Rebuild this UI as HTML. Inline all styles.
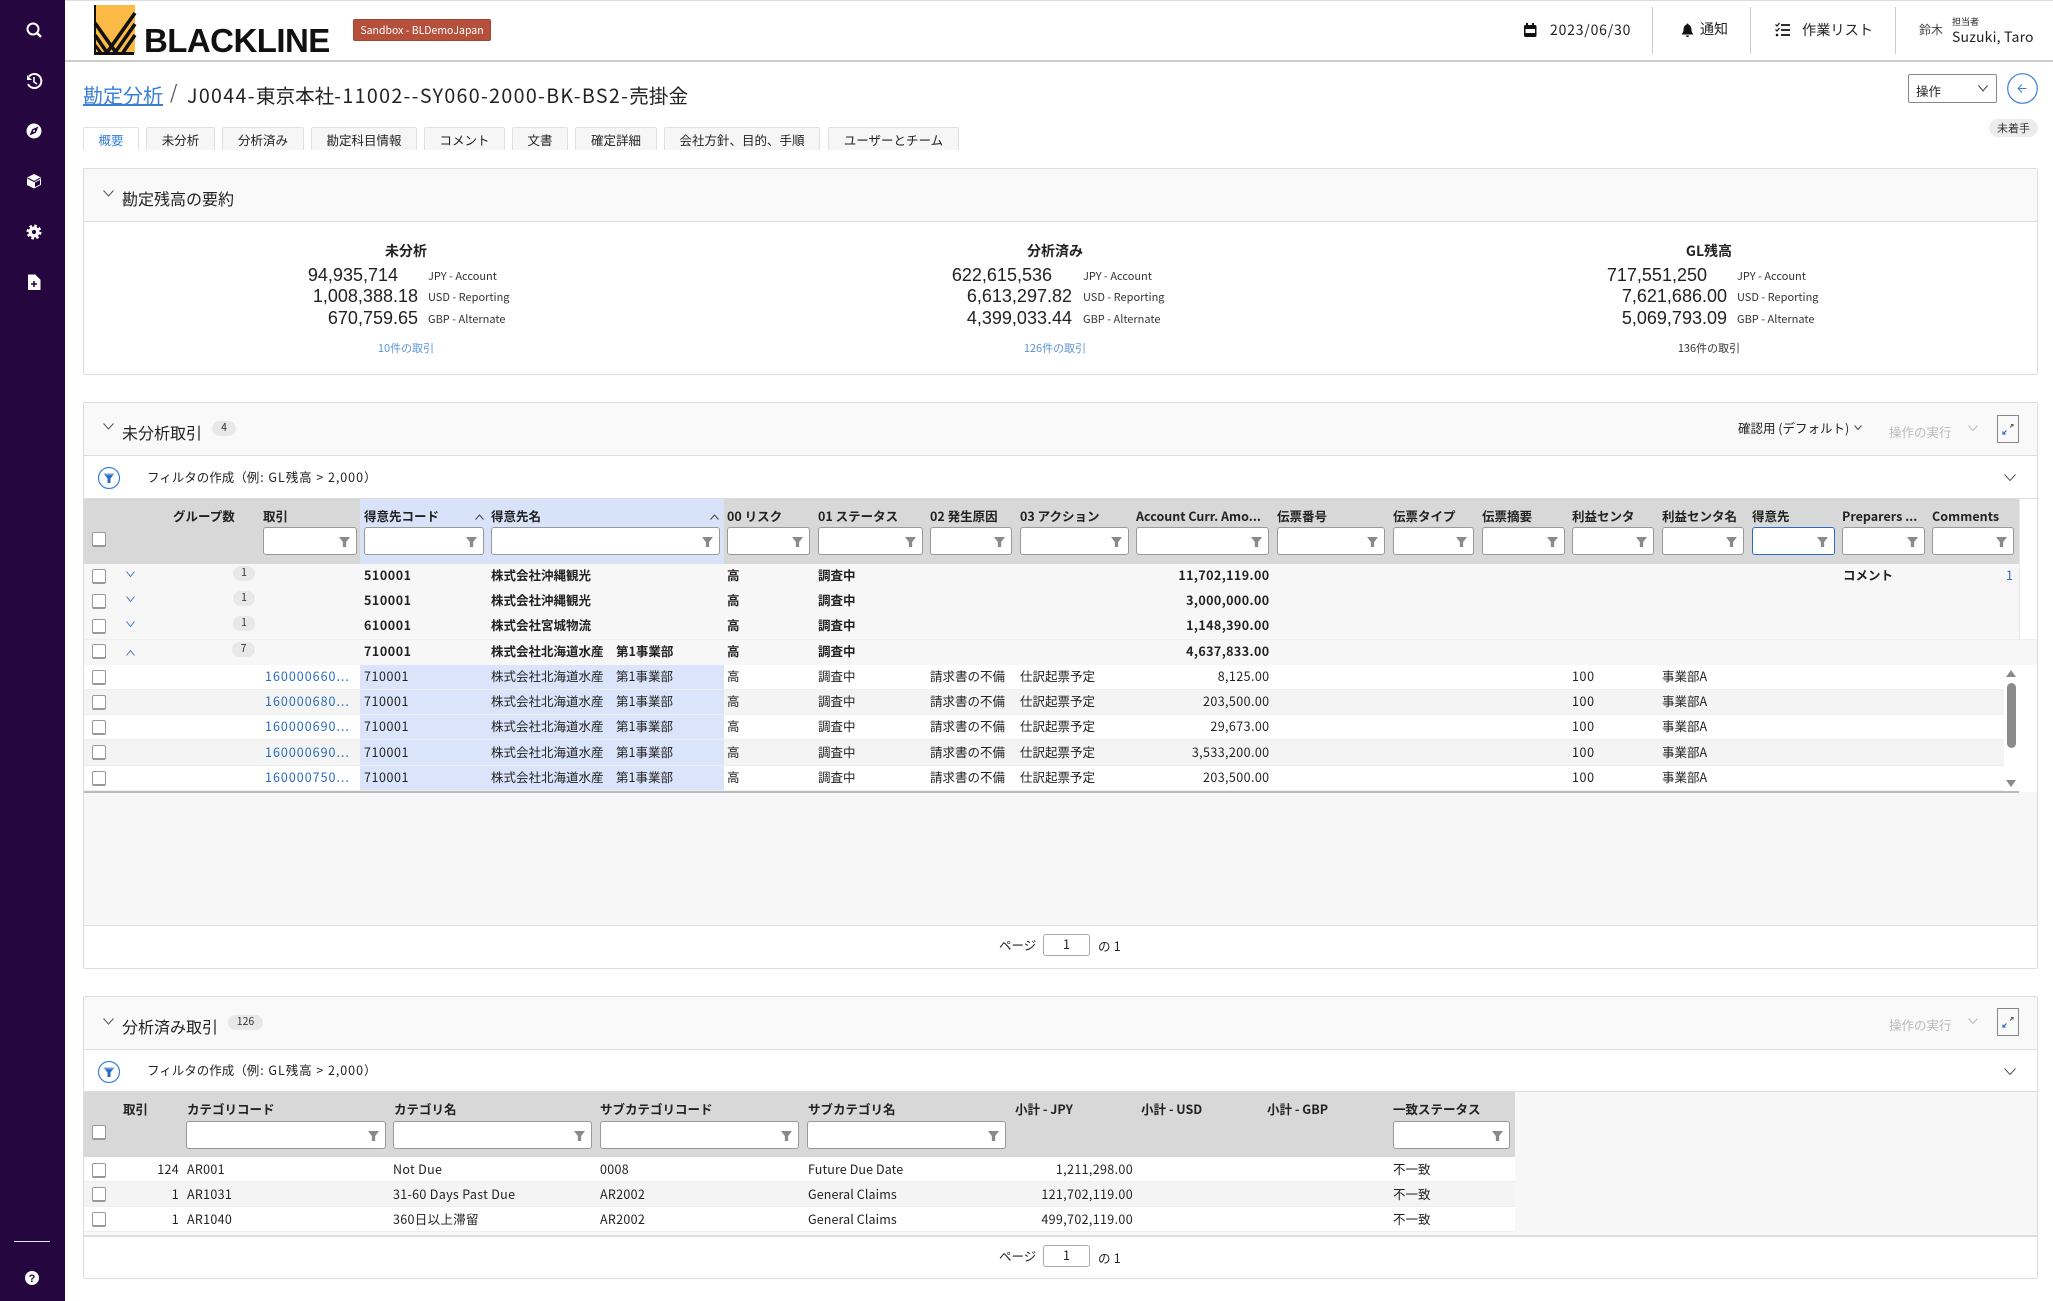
<!DOCTYPE html>
<html lang="ja"><head><meta charset="utf-8"><title>BlackLine</title>
<style>
html,body{margin:0;padding:0;background:#fff}
body{position:relative;width:2053px;height:1301px;overflow:hidden;font-family:"Noto Sans CJK JP","Liberation Sans",sans-serif;font-size:12.5px;color:#222}
.a{position:absolute;box-sizing:border-box}
.t{position:absolute;white-space:nowrap;line-height:20px}
svg{position:absolute;overflow:visible}
.tab{position:absolute;top:127px;height:23px;box-sizing:border-box;border:1px solid #e0e0e0;border-bottom:0;background:#f6f6f6;text-align:center;line-height:23px;border-radius:2px 2px 0 0;white-space:nowrap}
.panel{position:absolute;left:83px;width:1955px;box-sizing:border-box;border:1px solid #ddd;border-radius:2px}
.ph{position:absolute;left:84px;width:1953px;height:52px;background:#f9f9f9;border-bottom:1px solid #ddd}
.pt{position:absolute;font-size:16px;line-height:24px;left:122px;white-space:nowrap}
.bd{position:absolute;background:#e8e8e8;border-radius:8px;text-align:center;font-size:10.5px;line-height:14px;height:15px;color:#333}
.f{position:absolute;box-sizing:border-box;height:28px;background:#fff;border:1px solid #999;border-radius:3px}
.f::after{content:"";position:absolute;right:6px;top:9px;width:11px;height:10px;background:#8a8a8a;clip-path:polygon(0 0,100% 0,65% 50%,65% 100%,35% 100%,35% 50%)}
.h{position:absolute;white-space:nowrap;line-height:20px;font-weight:700;top:506px}
.h3{top:1099px}
.cb{position:absolute;box-sizing:border-box;left:92px;width:14px;height:15px;background:#fff;border:1px solid #999;border-bottom-width:2px;border-radius:2px}
.r{position:absolute;left:84px;width:1920px;height:25px;box-sizing:border-box}
.g{width:1935px;background:#f7f7f7;font-weight:700}
.o{background:#fff;border-bottom:1px solid #eee}
.e{background:#f4f4f4;border-bottom:1px solid #eee}
.r span{position:absolute;top:1px;line-height:20px;white-space:nowrap}
.hl{left:276px;width:364px;height:100%;position:absolute;top:0;background:#dae4fb}
.c1{left:181px;color:#2a6cc0;letter-spacing:1px}
.c2{left:280px;letter-spacing:.55px}
.c3{left:407px}.c4{left:643px}.c5{left:734px}.c6{left:846px}.c7{left:936px}
.c8{left:1035px;width:150.500px;text-align:right;letter-spacing:.4px}
.c9{left:1488px;letter-spacing:.6px}.c10{left:1578px}
.lb{position:absolute;font-size:11px;line-height:16px;white-space:nowrap;color:#333}
.num{position:absolute;font-family:"Liberation Sans",sans-serif;font-size:18px;line-height:22px;text-align:right;width:160px}
.st{position:absolute;width:120px;text-align:center;font-size:14px;font-weight:700;line-height:20px;top:241px}
.lk{position:absolute;width:120px;text-align:center;font-size:11px;line-height:16px;top:340px;color:#5a94d8}
.pg{position:absolute;box-sizing:border-box;left:1043px;width:47px;height:22px;border:1px solid #aaa;border-radius:3px;text-align:center;line-height:18px;font-size:12.5px;background:#fff}
.m{position:absolute;left:84px;height:25px;box-sizing:border-box;width:1431px}
.m span{position:absolute;top:2px;line-height:20px;white-space:nowrap}
.d1{left:0;width:95px;text-align:right;letter-spacing:.3px}.d2{left:103px;letter-spacing:.3px}.d3{left:309px;letter-spacing:.32px}.d4{left:516px;letter-spacing:.3px}.d5{left:724px;letter-spacing:.1px}
.d6{left:899px;width:150px;text-align:right;letter-spacing:.35px}.d7{left:1309px}
.x{letter-spacing:1.35px}
.y{letter-spacing:.95px}
</style></head><body>

<!-- sidebar -->
<div class="a" style="left:0;top:0;width:65px;height:1301px;background:#26063f"></div>
<svg width="65" height="1301" style="left:0;top:0">
<circle cx="33" cy="29" r="5.5" fill="none" stroke="#fff" stroke-width="2"/><path d="M37 33l4 4" stroke="#fff" stroke-width="2.4"/>
<path d="M29 76.500A7 7 0 1 1 28 84" fill="none" stroke="#fff" stroke-width="2"/><path d="M27 75v5h5z" fill="#fff"/><path d="M34 77v5l3 2" fill="none" stroke="#fff" stroke-width="1.6"/>
<circle cx="34" cy="131" r="7.5" fill="#fff"/><path d="M38.500 126.500l-2.700 6.300-6.300 2.700 2.700-6.300z" fill="#26063f"/><circle cx="34" cy="131" r="1" fill="#fff"/>
<path d="M34 174l7 3.500V185l-7 3.500-7-3.500v-7.500z" fill="#fff"/><path d="M35 182.500l5-2.500v4.500l-5 2.500z" fill="#26063f"/><path d="M27.500 178l6.500 3.500 6.500-3.500" fill="none" stroke="#26063f" stroke-width="1"/>
<circle cx="34" cy="232" r="3.800" fill="none" stroke="#fff" stroke-width="3.400"/><circle cx="34" cy="232" r="6.300" fill="none" stroke="#fff" stroke-width="2.400" stroke-dasharray="2.600 2.350"/>
<path d="M28.500 275h6.500l5 5v9.500h-11.500z" fill="#fff" stroke="#fff" stroke-linejoin="round"/><path d="M34 281v6M31 284h6" stroke="#26063f" stroke-width="1.600"/>
<rect x="14" y="1241" width="36" height="1" fill="#e8e4ee"/>
<circle cx="32" cy="1278" r="7" fill="#fff"/>
<text x="32" y="1282" font-size="11" font-weight="700" text-anchor="middle" font-family="Liberation Sans" fill="#26063f">?</text>
</svg>

<!-- top bar -->
<div class="a" style="left:65px;top:0;width:1988px;height:1px;background:#ddd"></div>
<div class="a" style="left:65px;top:60px;width:1988px;height:2px;background:#ccc"></div>
<svg width="44" height="52" style="left:93px;top:4px">
<rect x="2" y="1" width="40" height="48" fill="#fbb945"/>
<rect x="1" y="1" width="2" height="50" fill="#111"/>
<rect x="1" y="48" width="40" height="3" fill="#111"/>
<path d="M42 9L13 50M42 20L21 50M42 31L29 50M2 19L24 50M2 31L15 50" stroke="#111" stroke-width="3.600" fill="none"/>
<path d="M2 41l6 8" stroke="#111" stroke-width="3"/>
</svg>
<div class="t" style="left:144px;top:24px;line-height:34px;font-family:'Liberation Sans',sans-serif;font-weight:700;font-size:33px;letter-spacing:-.55px;color:#111">BLACKLINE</div>
<div class="a" style="left:353px;top:19px;width:138px;height:22px;background:#b5503c;border:1px solid #a34530;border-radius:2px;color:#fff;text-align:center;font-size:10.5px;line-height:21px;white-space:nowrap">Sandbox - BLDemoJapan</div>

<div class="a" style="left:1652px;top:7px;width:1px;height:47px;background:#ccc"></div>
<div class="a" style="left:1750px;top:7px;width:1px;height:47px;background:#ccc"></div>
<div class="a" style="left:1895px;top:7px;width:1px;height:47px;background:#ccc"></div>
<svg width="16" height="16" style="left:1523px;top:22px"><path d="M4 1v3M10 1v3" stroke="#111" stroke-width="2"/><rect x="1" y="3" width="12.500" height="12" rx="1.500" fill="#111"/><rect x="2.500" y="7" width="9.500" height="4" fill="#fff"/></svg>
<div class="t" style="left:1550px;top:20px;font-size:14px;letter-spacing:.8px">2023/06/30</div>
<svg width="16" height="16" style="left:1680px;top:22px"><path d="M7.500 1.500a1 1 0 0 1 1 1C11 3.500 11.500 6 11.500 8c0 2.500 1.500 3.500 2 4.500H1.500c.5-1 2-2 2-4.500 0-2 .5-4.500 3-5.500a1 1 0 0 1 1-1z" fill="#111"/><path d="M6 13.500h3a1.500 1.500 0 0 1-3 0z" fill="#111"/></svg>
<div class="t" style="left:1700px;top:19px;font-size:14px">通知</div>
<svg width="16" height="16" style="left:1775px;top:22px"><path d="M6 3h9M6 8h9M6 13h9" stroke="#111" stroke-width="1.800"/><path d="M.5 2.500l1.500 1.500 2.500-3M.5 7.500l1.500 1.500 2.500-3" fill="none" stroke="#111" stroke-width="1.200"/><circle cx="2" cy="13" r="1.300" fill="#111"/></svg>
<div class="t" style="left:1802px;top:20px;font-size:14.200px">作業リスト</div>
<div class="t" style="left:1919px;top:20px;font-size:12px;color:#444">鈴木</div>
<div class="t" style="left:1952px;top:12px;font-size:9px">担当者</div>
<div class="t" style="left:1952px;top:27px;font-size:14px;letter-spacing:.2px">Suzuki, Taro</div>

<!-- title -->
<div class="t" style="left:83px;top:81px;line-height:28px;font-size:20px;color:#3a7fd8;text-decoration:underline">勘定分析</div>
<div class="t" style="left:170px;top:78px;line-height:28px;font-size:19px;color:#555">/</div>
<div class="t" style="left:187px;top:81px;line-height:28px;font-size:19.600px"><span class="x">J0044-</span>東京本社<span class="x">-11002--SY060-2000-BK-BS2-</span>売掛金</div>

<div class="a" style="left:1908px;top:74px;width:89px;height:29px;border:1px solid #888;border-radius:2px"></div>
<div class="t" style="left:1916px;top:81px;font-size:12.500px">操作</div>
<svg width="10" height="7" style="left:1978px;top:85px"><path d="M.5.500l4.500 5.500 4.500-5.500" fill="none" stroke="#444"/></svg>
<svg width="32" height="32" style="left:2007px;top:73px"><circle cx="15.500" cy="15.500" r="14.800" fill="#fff" stroke="#3a7fd8" stroke-width="1.200"/><path d="M19.500 15.500h-8M15 11.500l-4 4 4 4" fill="none" stroke="#3a7fd8"/></svg>
<div class="a" style="left:1989px;top:119px;width:49px;height:18px;background:#ececec;border-radius:9px;text-align:center;font-size:11px;line-height:18px;color:#333">未着手</div>

<!-- tabs -->
<div class="tab" style="left:83px;width:56px;background:#fff;color:#3a7fd8">概要</div>
<div class="tab" style="left:146px;width:69px">未分析</div>
<div class="tab" style="left:222px;width:82px">分析済み</div>
<div class="tab" style="left:311px;width:106px">勘定科目情報</div>
<div class="tab" style="left:424px;width:81px">コメント</div>
<div class="tab" style="left:512px;width:56px">文書</div>
<div class="tab" style="left:575px;width:82px">確定詳細</div>
<div class="tab" style="left:664px;width:156px">会社方針、目的、手順</div>
<div class="tab" style="left:828px;width:131px">ユーザーとチーム</div>

<!-- panel 1 -->
<div class="panel" style="top:168px;height:207px"></div>
<div class="ph" style="top:169px"></div>
<svg width="11" height="7" style="left:103px;top:190px"><path d="M.5.500l5 5.500 5-5.500" fill="none" stroke="#555"/></svg>
<div class="pt" style="top:186px">勘定残高の要約</div>

<div class="st" style="left:346px">未分析</div>
<div class="num" style="left:238px;top:264px">94,935,714</div>
<div class="num" style="left:258px;top:285px">1,008,388.18</div>
<div class="num" style="left:258px;top:307px">670,759.65</div>
<div class="lb" style="left:428px;top:268px">JPY - Account</div>
<div class="lb" style="left:428px;top:289px">USD - Reporting</div>
<div class="lb" style="left:428px;top:311px">GBP - Alternate</div>
<div class="lk" style="left:346px">10件の取引</div>

<div class="st" style="left:995px">分析済み</div>
<div class="num" style="left:892px;top:264px">622,615,536</div>
<div class="num" style="left:912px;top:285px">6,613,297.82</div>
<div class="num" style="left:912px;top:307px">4,399,033.44</div>
<div class="lb" style="left:1083px;top:268px">JPY - Account</div>
<div class="lb" style="left:1083px;top:289px">USD - Reporting</div>
<div class="lb" style="left:1083px;top:311px">GBP - Alternate</div>
<div class="lk" style="left:995px">126件の取引</div>

<div class="st" style="left:1649px">GL残高</div>
<div class="num" style="left:1547px;top:264px">717,551,250</div>
<div class="num" style="left:1567px;top:285px">7,621,686.00</div>
<div class="num" style="left:1567px;top:307px">5,069,793.09</div>
<div class="lb" style="left:1737px;top:268px">JPY - Account</div>
<div class="lb" style="left:1737px;top:289px">USD - Reporting</div>
<div class="lb" style="left:1737px;top:311px">GBP - Alternate</div>
<div class="lk" style="left:1649px;color:#333">136件の取引</div>

<!-- panel 2 -->
<div class="panel" style="top:402px;height:567px"></div>
<div class="ph" style="top:403px"></div>
<svg width="11" height="7" style="left:103px;top:423px"><path d="M.5.500l5 5.500 5-5.500" fill="none" stroke="#555"/></svg>
<div class="pt" style="top:420px">未分析取引</div>
<div class="bd" style="left:212px;top:421px;width:24px">4</div>
<div class="t" style="left:1738px;top:418px;font-size:12.500px">確認用 (デフォルト)</div>
<svg width="8" height="6" style="left:1854px;top:425px"><path d="M.5.500l3.500 4 3.500-4" fill="none" stroke="#444"/></svg>
<div class="t" style="left:1889px;top:422px;color:#bbb;font-size:12.500px">操作の実行</div>
<svg width="10" height="7" style="left:1968px;top:425px"><path d="M.5.500l4.500 5 4.500-5" fill="none" stroke="#bbb"/></svg>
<div class="a" style="left:1997px;top:415px;width:22px;height:28px;border:1px solid #888"></div>
<svg width="12" height="12" style="left:2002px;top:423px"><path d="M9 1.500H11V3.500M11 1.500L8 4.500" fill="none" stroke="#555"/><path d="M1 8.500V11H3.500M1 11L4.500 7.500" fill="none" stroke="#2a6cc0" stroke-width="1.200"/></svg>

<svg width="24" height="24" style="left:97px;top:466px"><ellipse cx="12" cy="12" rx="10.500" ry="10.500" fill="#fff" stroke="#3a7fd8" stroke-width="1.200"/><path d="M6.500 7.500h11l-4 5v4.500h-3v-4.500z" fill="#2a6cc0"/><path d="M6.500 7.500h11l-1.400 1.800H7.900z" fill="#6d9fdf"/></svg>
<div class="t" style="left:147px;top:467px">フィルタの作成（<span class="y">例: GL残高 &gt; 2,000</span>）</div>
<svg width="12" height="7" style="left:2004px;top:474px"><path d="M.5.500l5.500 6 5.500-6" fill="none" stroke="#555"/></svg>
<div class="a" style="left:84px;top:498px;width:1953px;height:1px;background:#ddd"></div>

<!-- table 2 header -->
<div class="a" style="left:84px;top:499px;width:1935px;height:65px;background:#d8d8d8"></div>
<div class="a" style="left:360px;top:499px;width:364px;height:65px;background:#d8e3fa"></div>
<div class="cb" style="top:532px"></div>
<div class="h" style="left:173px">グループ数</div>
<div class="h" style="left:263px">取引</div><div class="f" style="left:263px;width:94px;top:527px"></div>
<div class="h" style="left:364px">得意先コード</div><div class="f" style="left:364px;width:120px;top:527px"></div>
<svg width="9" height="6" style="left:475px;top:514px"><path d="M.5 5.500L4.500 1l4 4.500" fill="none" stroke="#444"/></svg>
<div class="h" style="left:491px">得意先名</div><div class="f" style="left:491px;width:229px;top:527px"></div>
<svg width="9" height="6" style="left:710px;top:514px"><path d="M.5 5.500L4.500 1l4 4.500" fill="none" stroke="#444"/></svg>
<div class="h" style="left:727px">00 リスク</div><div class="f" style="left:727px;width:83px;top:527px"></div>
<div class="h" style="left:818px">01 ステータス</div><div class="f" style="left:818px;width:105px;top:527px"></div>
<div class="h" style="left:930px">02 発生原因</div><div class="f" style="left:930px;width:82px;top:527px"></div>
<div class="h" style="left:1020px">03 アクション</div><div class="f" style="left:1020px;width:109px;top:527px"></div>
<div class="h" style="left:1136px">Account Curr. Amo...</div><div class="f" style="left:1136px;width:133px;top:527px"></div>
<div class="h" style="left:1277px">伝票番号</div><div class="f" style="left:1277px;width:108px;top:527px"></div>
<div class="h" style="left:1393px">伝票タイプ</div><div class="f" style="left:1393px;width:81px;top:527px"></div>
<div class="h" style="left:1482px">伝票摘要</div><div class="f" style="left:1482px;width:83px;top:527px"></div>
<div class="h" style="left:1572px">利益センタ</div><div class="f" style="left:1572px;width:82px;top:527px"></div>
<div class="h" style="left:1662px">利益センタ名</div><div class="f" style="left:1662px;width:82px;top:527px"></div>
<div class="h" style="left:1752px">得意先</div><div class="f" style="left:1752px;width:83px;top:527px;border-color:#2a6cc0"></div>
<div class="h" style="left:1842px">Preparers ...</div><div class="f" style="left:1842px;width:83px;top:527px"></div>
<div class="h" style="left:1932px;letter-spacing:.05px">Comments</div><div class="f" style="left:1932px;width:82px;top:527px"></div>

<!-- group rows -->
<div class="a" style="left:2019px;top:499px;width:1px;height:140px;background:#e8e8e8"></div>
<div class="r g" style="top:564px;height:25px"><span class="c2">510001</span><span class="c3">株式会社沖縄観光</span><span class="c4">高</span><span class="c5">調査中</span><span class="c8">11,702,119.00</span><span style="left:1759px;font-size:12.500px">コメント</span><span style="left:1922px;width:6px;font-weight:400;color:#2a6cc0">1</span></div>
<div class="r g" style="top:589px"><span class="c2">510001</span><span class="c3">株式会社沖縄観光</span><span class="c4">高</span><span class="c5">調査中</span><span class="c8">3,000,000.00</span></div>
<div class="r g" style="top:614px"><span class="c2">610001</span><span class="c3">株式会社宮城物流</span><span class="c4">高</span><span class="c5">調査中</span><span class="c8">1,148,390.00</span></div>
<div class="r g" style="top:639px;height:26px;width:1953px;border-top:1px solid #eee"><span class="c2">710001</span><span class="c3">株式会社北海道水産　第1事業部</span><span class="c4">高</span><span class="c5">調査中</span><span class="c8">4,637,833.00</span></div>

<!-- detail rows -->
<div class="r o" style="top:665px"><div class="hl"></div><span class="c1">160000660...</span><span class="c2">710001</span><span class="c3">株式会社北海道水産　第1事業部</span><span class="c4">高</span><span class="c5">調査中</span><span class="c6">請求書の不備</span><span class="c7">仕訳起票予定</span><span class="c8">8,125.00</span><span class="c9">100</span><span class="c10">事業部A</span></div>
<div class="r e" style="top:690px"><div class="hl"></div><span class="c1">160000680...</span><span class="c2">710001</span><span class="c3">株式会社北海道水産　第1事業部</span><span class="c4">高</span><span class="c5">調査中</span><span class="c6">請求書の不備</span><span class="c7">仕訳起票予定</span><span class="c8">203,500.00</span><span class="c9">100</span><span class="c10">事業部A</span></div>
<div class="r o" style="top:715px"><div class="hl"></div><span class="c1">160000690...</span><span class="c2">710001</span><span class="c3">株式会社北海道水産　第1事業部</span><span class="c4">高</span><span class="c5">調査中</span><span class="c6">請求書の不備</span><span class="c7">仕訳起票予定</span><span class="c8">29,673.00</span><span class="c9">100</span><span class="c10">事業部A</span></div>
<div class="r e" style="top:740px;height:26px"><div class="hl"></div><span class="c1" style="top:2px">160000690...</span><span class="c2" style="top:2px">710001</span><span class="c3" style="top:2px">株式会社北海道水産　第1事業部</span><span class="c4" style="top:2px">高</span><span class="c5" style="top:2px">調査中</span><span class="c6" style="top:2px">請求書の不備</span><span class="c7" style="top:2px">仕訳起票予定</span><span class="c8" style="top:2px">3,533,200.00</span><span class="c9" style="top:2px">100</span><span class="c10" style="top:2px">事業部A</span></div>
<div class="r o" style="top:766px"><div class="hl"></div><span class="c1">160000750...</span><span class="c2">710001</span><span class="c3">株式会社北海道水産　第1事業部</span><span class="c4">高</span><span class="c5">調査中</span><span class="c6">請求書の不備</span><span class="c7">仕訳起票予定</span><span class="c8">203,500.00</span><span class="c9">100</span><span class="c10">事業部A</span></div>

<!-- scrollbar -->
<div class="a" style="left:2004px;top:665px;width:15px;height:127px;background:#fff"></div>
<svg width="12" height="8" style="left:2006px;top:670px"><path d="M5 0l5 7H0z" fill="#8a8a8a"/></svg>
<div class="a" style="left:2007px;top:683px;width:9px;height:65px;background:#8a8a8a;border-radius:5px"></div>
<svg width="12" height="8" style="left:2006px;top:780px"><path d="M0 0h10L5 7z" fill="#8a8a8a"/></svg>

<!-- checkboxes + chevrons + badges -->
<div class="cb" style="top:569px"></div><div class="cb" style="top:594px"></div><div class="cb" style="top:619px"></div><div class="cb" style="top:644px"></div>
<div class="cb" style="top:670px"></div><div class="cb" style="top:695px"></div><div class="cb" style="top:720px"></div><div class="cb" style="top:745px"></div><div class="cb" style="top:771px"></div>
<svg width="10" height="7" style="left:126px;top:571px"><path d="M.5.500l4 5 4-5" fill="none" stroke="#3c78c8"/></svg>
<svg width="10" height="7" style="left:126px;top:596px"><path d="M.5.500l4 5 4-5" fill="none" stroke="#3c78c8"/></svg>
<svg width="10" height="7" style="left:126px;top:621px"><path d="M.5.500l4 5 4-5" fill="none" stroke="#3c78c8"/></svg>
<svg width="10" height="7" style="left:126px;top:650px"><path d="M.5 5.500l4-5 4 5" fill="none" stroke="#3c78c8"/></svg>
<div class="bd" style="left:233px;top:566px;width:22px">1</div>
<div class="bd" style="left:233px;top:591px;width:22px">1</div>
<div class="bd" style="left:233px;top:616px;width:22px">1</div>
<div class="bd" style="left:232px;top:642px;width:23px">7</div>

<div class="a" style="left:84px;top:792px;width:1953px;height:133px;background:#f7f7f7"></div>
<div class="a" style="left:84px;top:791px;width:1935px;height:2px;background:#bbb"></div>
<div class="a" style="left:84px;top:925px;width:1953px;height:1px;background:#ddd"></div>
<div class="t" style="left:999px;top:935px">ページ</div>
<div class="pg" style="top:934px">1</div>
<div class="t" style="left:1098px;top:936px;letter-spacing:.2px">の 1</div>

<!-- panel 3 -->
<div class="panel" style="top:996px;height:283px"></div>
<div class="ph" style="top:997px"></div>
<svg width="11" height="7" style="left:103px;top:1018px"><path d="M.5.500l5 5.500 5-5.500" fill="none" stroke="#555"/></svg>
<div class="pt" style="top:1014px">分析済み取引</div>
<div class="bd" style="left:228px;top:1015px;width:35px">126</div>
<div class="t" style="left:1889px;top:1015px;color:#bbb">操作の実行</div>
<svg width="10" height="7" style="left:1968px;top:1018px"><path d="M.5.500l4.500 5 4.500-5" fill="none" stroke="#bbb"/></svg>
<div class="a" style="left:1997px;top:1008px;width:22px;height:28px;border:1px solid #888"></div>
<svg width="12" height="12" style="left:2002px;top:1016px"><path d="M9 1.500H11V3.500M11 1.500L8 4.500" fill="none" stroke="#555"/><path d="M1 8.500V11H3.500M1 11L4.500 7.500" fill="none" stroke="#2a6cc0" stroke-width="1.200"/></svg>
<svg width="24" height="24" style="left:97px;top:1060px"><ellipse cx="12" cy="12" rx="10.500" ry="10.500" fill="#fff" stroke="#3a7fd8" stroke-width="1.200"/><path d="M6.500 7.500h11l-4 5v4.500h-3v-4.500z" fill="#2a6cc0"/><path d="M6.500 7.500h11l-1.400 1.800H7.900z" fill="#6d9fdf"/></svg>
<div class="t" style="left:147px;top:1060px">フィルタの作成（<span class="y">例: GL残高 &gt; 2,000</span>）</div>
<svg width="12" height="7" style="left:2004px;top:1068px"><path d="M.5.500l5.500 6 5.500-6" fill="none" stroke="#555"/></svg>
<div class="a" style="left:84px;top:1091px;width:1953px;height:1px;background:#ddd"></div>

<div class="a" style="left:1515px;top:1092px;width:522px;height:144px;background:#f7f7f7"></div>
<div class="a" style="left:84px;top:1092px;width:1431px;height:65px;background:#d8d8d8"></div>
<div class="cb" style="top:1125px"></div>
<div class="h h3" style="left:123px">取引</div>
<div class="h h3" style="left:187px">カテゴリコード</div><div class="f" style="left:186px;width:200px;top:1121px"></div>
<div class="h h3" style="left:394px">カテゴリ名</div><div class="f" style="left:393px;width:199px;top:1121px"></div>
<div class="h h3" style="left:600px">サブカテゴリコード</div><div class="f" style="left:600px;width:199px;top:1121px"></div>
<div class="h h3" style="left:808px">サブカテゴリ名</div><div class="f" style="left:807px;width:199px;top:1121px"></div>
<div class="h h3" style="left:1015px">小計 - JPY</div>
<div class="h h3" style="left:1141px">小計 - USD</div>
<div class="h h3" style="left:1267px">小計 - GBP</div>
<div class="h h3" style="left:1393px">一致ステータス</div><div class="f" style="left:1393px;width:117px;top:1121px"></div>

<div class="m o" style="top:1157px"><span class="d1">124</span><span class="d2">AR001</span><span class="d3">Not Due</span><span class="d4">0008</span><span class="d5">Future Due Date</span><span class="d6">1,211,298.00</span><span class="d7">不一致</span></div>
<div class="m e" style="top:1182px"><span class="d1">1</span><span class="d2">AR1031</span><span class="d3">31-60 Days Past Due</span><span class="d4">AR2002</span><span class="d5">General Claims</span><span class="d6">121,702,119.00</span><span class="d7">不一致</span></div>
<div class="m o" style="top:1207px"><span class="d1">1</span><span class="d2">AR1040</span><span class="d3">360日以上滞留</span><span class="d4">AR2002</span><span class="d5">General Claims</span><span class="d6">499,702,119.00</span><span class="d7">不一致</span></div>
<div class="cb" style="top:1163px"></div><div class="cb" style="top:1187px"></div><div class="cb" style="top:1212px"></div>
<div class="a" style="left:84px;top:1232px;width:1431px;height:4px;background:#f7f7f7"></div>
<div class="a" style="left:84px;top:1235px;width:1953px;height:2px;background:#ddd"></div>
<div class="t" style="left:999px;top:1246px">ページ</div>
<div class="pg" style="top:1245px">1</div>
<div class="t" style="left:1098px;top:1248px;letter-spacing:.2px">の 1</div>

</body></html>
